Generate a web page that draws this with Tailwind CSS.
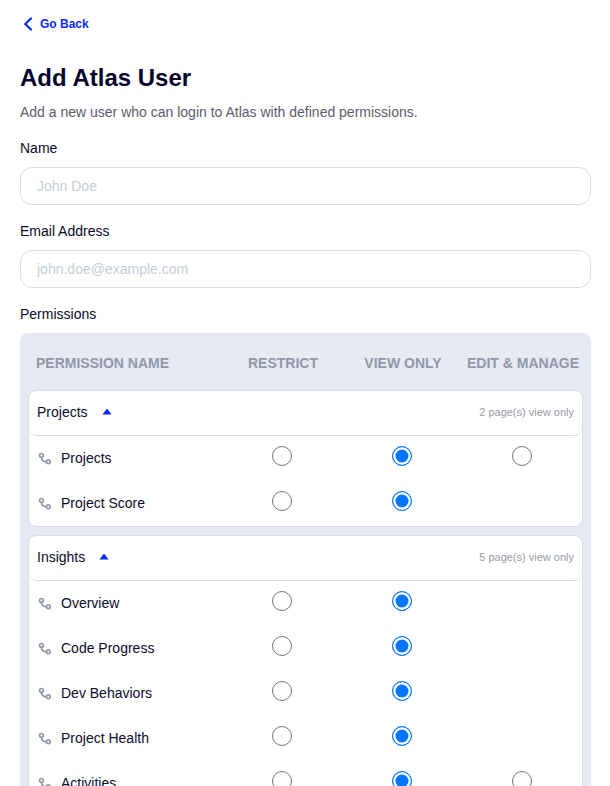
<!DOCTYPE html>
<html lang="en">
<head>
    <meta charset="UTF-8">
    <meta name="viewport" content="width=device-width, initial-scale=1.0">
    <title>Add Atlas User</title>
    <script src="https://cdn.jsdelivr.net/npm/@tailwindcss/browser@4"></script>
</head>
<body class="bg-white font-['Liberation_Sans',Arial,sans-serif] text-[#0b0b2b]">
    <div class="h-[786px] overflow-hidden pl-5 pr-[19px]">
        <a href="#" class="flex h-12 items-center gap-[7px] pl-[3px] text-xs font-bold text-[#0a2bff]">
            <svg width="10" height="14" viewBox="0 0 10 14" fill="none" stroke="#0a2bff" stroke-width="2.2" stroke-linecap="round" stroke-linejoin="round"><path d="M8 1.5 2.2 7 8 12.5"/></svg>
            Go Back
        </a>

        <h1 class="mt-[14px] text-2xl leading-8 font-bold text-[#05052b]">Add Atlas User</h1>
        <p class="mt-[8px] text-sm leading-5 text-[#5c5c6e]">Add a new user who can login to Atlas with defined permissions.</p>

        <label class="mt-[16px] block text-sm leading-5">Name</label>
        <input type="text" placeholder="John Doe" class="mt-[9px] block h-[38px] w-full rounded-xl border border-[#d9dde8] px-4 text-sm placeholder:text-[#c5cddb]">

        <label class="mt-[16px] block text-sm leading-5">Email Address</label>
        <input type="text" placeholder="john.doe@example.com" class="mt-[9px] block h-[38px] w-full rounded-xl border border-[#d9dde8] px-4 text-sm placeholder:text-[#c5cddb]">

        <label class="mt-[16px] block text-sm leading-5">Permissions</label>

        <div class="mt-[9px] rounded-lg bg-[#e6eaf2] px-2 pb-2">
            <div class="grid h-[57px] grid-cols-[195px_120px_120px_120px] items-center pt-[2px] text-center text-sm font-bold text-[#9397ab] uppercase">
                <div class="pl-2 text-left">Permission Name</div>
                <div>Restrict</div>
                <div>View Only</div>
                <div class="whitespace-nowrap">Edit &amp; Manage</div>
            </div>

            <div class="rounded-lg border border-[#d9dde8] bg-white">
                <div class="flex h-[45px] items-center justify-between rounded-lg border-b border-[#d9dde8] pr-2 pb-[2px] pl-2">
                    <div class="flex items-center gap-[14px] text-sm">Projects
                        <svg width="10" height="6" viewBox="0 0 10 6" fill="#0a2bff"><path d="M4.2.6a1 1 0 0 1 1.6 0L9.6 5.4H.4z"/></svg>
                    </div>
                    <span class="text-[11px] text-[#9a9aa8]">2 page(s) view only</span>
                </div>
                <div class="grid h-[45px] grid-cols-[193px_120px_120px_119px] items-center pb-[2px]">
                    <div class="flex items-center gap-[9px] pl-[9px] text-sm">
                        <svg width="14" height="14" viewBox="0 0 14 14" fill="none" stroke="#9498ab" stroke-width="1.7"><circle cx="3.4" cy="4.4" r="1.9"/><circle cx="10.3" cy="10.8" r="1.9"/><path d="M3.4 6.3C3.7 9 5.3 10.7 8.4 10.8"/></svg>
                        Projects
                    </div>
                    <div class="flex justify-center"><input type="radio" name="p1" class="mb-1 size-5 appearance-none rounded-full border border-[#767676] checked:border-[#0075ff] checked:bg-[#0075ff] checked:shadow-[inset_0_0_0_2.5px_white]"></div>
                    <div class="flex justify-center"><input type="radio" name="p1" checked class="mb-1 size-5 appearance-none rounded-full border border-[#767676] checked:border-[#0075ff] checked:bg-[#0075ff] checked:shadow-[inset_0_0_0_2.5px_white]"></div>
                    <div class="flex justify-center"><input type="radio" name="p1" class="mb-1 size-5 appearance-none rounded-full border border-[#767676] checked:border-[#0075ff] checked:bg-[#0075ff] checked:shadow-[inset_0_0_0_2.5px_white]"></div>
                </div>
                <div class="grid h-[45px] grid-cols-[193px_120px_120px_119px] items-center pb-[2px]">
                    <div class="flex items-center gap-[9px] pl-[9px] text-sm">
                        <svg width="14" height="14" viewBox="0 0 14 14" fill="none" stroke="#9498ab" stroke-width="1.7"><circle cx="3.4" cy="4.4" r="1.9"/><circle cx="10.3" cy="10.8" r="1.9"/><path d="M3.4 6.3C3.7 9 5.3 10.7 8.4 10.8"/></svg>
                        Project Score
                    </div>
                    <div class="flex justify-center"><input type="radio" name="p2" class="mb-1 size-5 appearance-none rounded-full border border-[#767676] checked:border-[#0075ff] checked:bg-[#0075ff] checked:shadow-[inset_0_0_0_2.5px_white]"></div>
                    <div class="flex justify-center"><input type="radio" name="p2" checked class="mb-1 size-5 appearance-none rounded-full border border-[#767676] checked:border-[#0075ff] checked:bg-[#0075ff] checked:shadow-[inset_0_0_0_2.5px_white]"></div>
                    <div></div>
                </div>
            </div>

            <div id="insights" class="mt-2 rounded-lg border border-[#d9dde8] bg-white">
                <div class="flex h-[45px] items-center justify-between rounded-lg border-b border-[#d9dde8] pr-2 pb-[2px] pl-2">
                    <div class="flex items-center gap-[14px] text-sm">Insights
                        <svg width="10" height="6" viewBox="0 0 10 6" fill="#0a2bff"><path d="M4.2.6a1 1 0 0 1 1.6 0L9.6 5.4H.4z"/></svg>
                    </div>
                    <span class="text-[11px] text-[#9a9aa8]">5 page(s) view only</span>
                </div>
                <div class="grid h-[45px] grid-cols-[193px_120px_120px_119px] items-center pb-[2px]">
                    <div class="flex items-center gap-[9px] pl-[9px] text-sm">
                        <svg width="14" height="14" viewBox="0 0 14 14" fill="none" stroke="#9498ab" stroke-width="1.7"><circle cx="3.4" cy="4.4" r="1.9"/><circle cx="10.3" cy="10.8" r="1.9"/><path d="M3.4 6.3C3.7 9 5.3 10.7 8.4 10.8"/></svg>
                        Overview
                    </div>
                    <div class="flex justify-center"><input type="radio" name="i1" class="mb-1 size-5 appearance-none rounded-full border border-[#767676] checked:border-[#0075ff] checked:bg-[#0075ff] checked:shadow-[inset_0_0_0_2.5px_white]"></div>
                    <div class="flex justify-center"><input type="radio" name="i1" checked class="mb-1 size-5 appearance-none rounded-full border border-[#767676] checked:border-[#0075ff] checked:bg-[#0075ff] checked:shadow-[inset_0_0_0_2.5px_white]"></div>
                    <div></div>
                </div>
                <div class="grid h-[45px] grid-cols-[193px_120px_120px_119px] items-center pb-[2px]">
                    <div class="flex items-center gap-[9px] pl-[9px] text-sm">
                        <svg width="14" height="14" viewBox="0 0 14 14" fill="none" stroke="#9498ab" stroke-width="1.7"><circle cx="3.4" cy="4.4" r="1.9"/><circle cx="10.3" cy="10.8" r="1.9"/><path d="M3.4 6.3C3.7 9 5.3 10.7 8.4 10.8"/></svg>
                        Code Progress
                    </div>
                    <div class="flex justify-center"><input type="radio" name="i2" class="mb-1 size-5 appearance-none rounded-full border border-[#767676] checked:border-[#0075ff] checked:bg-[#0075ff] checked:shadow-[inset_0_0_0_2.5px_white]"></div>
                    <div class="flex justify-center"><input type="radio" name="i2" checked class="mb-1 size-5 appearance-none rounded-full border border-[#767676] checked:border-[#0075ff] checked:bg-[#0075ff] checked:shadow-[inset_0_0_0_2.5px_white]"></div>
                    <div></div>
                </div>
                <div class="grid h-[45px] grid-cols-[193px_120px_120px_119px] items-center pb-[2px]">
                    <div class="flex items-center gap-[9px] pl-[9px] text-sm">
                        <svg width="14" height="14" viewBox="0 0 14 14" fill="none" stroke="#9498ab" stroke-width="1.7"><circle cx="3.4" cy="4.4" r="1.9"/><circle cx="10.3" cy="10.8" r="1.9"/><path d="M3.4 6.3C3.7 9 5.3 10.7 8.4 10.8"/></svg>
                        Dev Behaviors
                    </div>
                    <div class="flex justify-center"><input type="radio" name="i3" class="mb-1 size-5 appearance-none rounded-full border border-[#767676] checked:border-[#0075ff] checked:bg-[#0075ff] checked:shadow-[inset_0_0_0_2.5px_white]"></div>
                    <div class="flex justify-center"><input type="radio" name="i3" checked class="mb-1 size-5 appearance-none rounded-full border border-[#767676] checked:border-[#0075ff] checked:bg-[#0075ff] checked:shadow-[inset_0_0_0_2.5px_white]"></div>
                    <div></div>
                </div>
                <div class="grid h-[45px] grid-cols-[193px_120px_120px_119px] items-center pb-[2px]">
                    <div class="flex items-center gap-[9px] pl-[9px] text-sm">
                        <svg width="14" height="14" viewBox="0 0 14 14" fill="none" stroke="#9498ab" stroke-width="1.7"><circle cx="3.4" cy="4.4" r="1.9"/><circle cx="10.3" cy="10.8" r="1.9"/><path d="M3.4 6.3C3.7 9 5.3 10.7 8.4 10.8"/></svg>
                        Project Health
                    </div>
                    <div class="flex justify-center"><input type="radio" name="i4" class="mb-1 size-5 appearance-none rounded-full border border-[#767676] checked:border-[#0075ff] checked:bg-[#0075ff] checked:shadow-[inset_0_0_0_2.5px_white]"></div>
                    <div class="flex justify-center"><input type="radio" name="i4" checked class="mb-1 size-5 appearance-none rounded-full border border-[#767676] checked:border-[#0075ff] checked:bg-[#0075ff] checked:shadow-[inset_0_0_0_2.5px_white]"></div>
                    <div></div>
                </div>
                <div class="grid h-[45px] grid-cols-[193px_120px_120px_119px] items-center pb-[2px]">
                    <div class="flex items-center gap-[9px] pl-[9px] text-sm">
                        <svg width="14" height="14" viewBox="0 0 14 14" fill="none" stroke="#9498ab" stroke-width="1.7"><circle cx="3.4" cy="4.4" r="1.9"/><circle cx="10.3" cy="10.8" r="1.9"/><path d="M3.4 6.3C3.7 9 5.3 10.7 8.4 10.8"/></svg>
                        Activities
                    </div>
                    <div class="flex justify-center"><input type="radio" name="i5" class="mb-1 size-5 appearance-none rounded-full border border-[#767676] checked:border-[#0075ff] checked:bg-[#0075ff] checked:shadow-[inset_0_0_0_2.5px_white]"></div>
                    <div class="flex justify-center"><input type="radio" name="i5" checked class="mb-1 size-5 appearance-none rounded-full border border-[#767676] checked:border-[#0075ff] checked:bg-[#0075ff] checked:shadow-[inset_0_0_0_2.5px_white]"></div>
                    <div class="flex justify-center"><input type="radio" name="i5" class="mb-1 size-5 appearance-none rounded-full border border-[#767676] checked:border-[#0075ff] checked:bg-[#0075ff] checked:shadow-[inset_0_0_0_2.5px_white]"></div>
                </div>
            </div>
        </div>
    </div>
</body>
</html>
